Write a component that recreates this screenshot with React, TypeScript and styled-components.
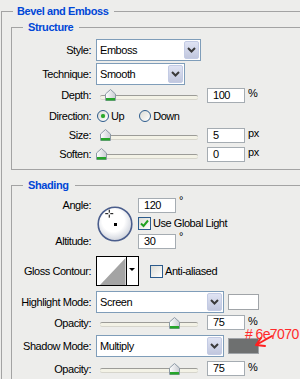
import React from "react";
import styled, { createGlobalStyle } from "styled-components";

const GlobalStyle = createGlobalStyle`
  html, body {
    margin: 0;
    padding: 0;
    background: #ededeb;
    overflow: hidden;
  }
  body {
    font-family: Tahoma, "Liberation Sans", Arial, sans-serif;
    font-size: 11px;
    letter-spacing: -0.45px;
    color: #000;
  }
`;

const Page = styled.div`
  width: 300px;
  height: 379px;
  padding-top: 5px;
  box-sizing: border-box;
  overflow: hidden;
`;

const LINE = "#a3a3a3";

const Group = styled.section<{ $outer?: boolean }>`
  width: ${(p) => (p.$outer ? "340px" : "330px")};
  margin-left: ${(p) => (p.$outer ? "1px" : "0")};
  & + & {
    margin-top: 9px;
  }
`;

const GroupHead = styled.div`
  display: flex;
  align-items: flex-end;
  height: 13px;
  &::before {
    content: "";
    width: 11px;
    height: 6px;
    border-top: 1px solid ${LINE};
    border-left: 1px solid ${LINE};
  }
  &::after {
    content: "";
    flex: 1;
    height: 6px;
    border-top: 1px solid ${LINE};
  }
`;

const GroupTitle = styled.span<{ $outer?: boolean }>`
  align-self: center;
  padding: ${(p) => (p.$outer ? "0 6px 0 4px" : "0 6px 0 5px")};
  line-height: 13px;
  font-weight: bold;
  letter-spacing: -0.4px;
  color: #0047d7;
`;

const GroupBody = styled.div<{ $outer?: boolean }>`
  border-left: 1px solid ${LINE};
  border-bottom: ${(p) => (p.$outer ? "none" : `1px solid ${LINE}`)};
  padding: ${(p) => (p.$outer ? "3px 0 40px 9px" : "5px 0 5px 0")};
`;

const Row = styled.div<{ $h: number; $mt?: number }>`
  position: relative;
  display: flex;
  align-items: center;
  height: ${(p) => p.$h}px;
  margin-top: ${(p) => p.$mt ?? 0}px;
`;

const Label = styled.span`
  flex-shrink: 0;
  width: 79px;
  margin-right: 5px;
  text-align: right;
  white-space: nowrap;
`;

const SelectBox = styled.div<{ $w: number }>`
  display: flex;
  align-items: stretch;
  width: ${(p) => p.$w}px;
  height: 22px;
  box-sizing: border-box;
  border: 1px solid #7f9db9;
  background: #fff;
`;

const SelectText = styled.span`
  flex: 1;
  padding-left: 3px;
  line-height: 20px;
`;

const DropButton = styled.span`
  display: flex;
  align-items: center;
  justify-content: center;
  width: 15px;
  margin: 1px;
  box-sizing: border-box;
  border: 1px solid #c3cbe4;
  border-radius: 2px;
  background: linear-gradient(#dfe3f3, #c1c7de);
`;

const Field = styled.div<{ $ml?: number }>`
  width: 38px;
  height: 15px;
  margin-left: ${(p) => p.$ml ?? 9}px;
  box-sizing: border-box;
  border: 1px solid #a5acb2;
  background: #fff;
  padding-left: 5px;
  line-height: 13px;
`;

const Unit = styled.span`
  margin-left: 3px;
  margin-top: -4px;
`;

const SliderBox = styled.div`
  position: relative;
  display: flex;
  align-items: center;
  width: 102px;
  height: 100%;
  padding-left: 4px;
  box-sizing: border-box;
`;

const Track = styled.div`
  width: 98px;
  height: 3px;
  margin-top: 3px;
  border-radius: 2px;
  border-top: 1px solid #9c9c98;
  background: #f3f2e6;
  box-shadow: 0 1px 0 #d6d5cc;
`;

const Thumb = styled.svg`
  position: absolute;
  top: 50%;
  margin-top: -6px;
`;

const RadioOption = styled.span<{ $ml: number }>`
  display: flex;
  align-items: center;
  margin-left: ${(p) => p.$ml}px;
`;

const RadioDot = styled.span<{ $on?: boolean }>`
  display: inline-flex;
  align-items: center;
  justify-content: center;
  width: 12px;
  height: 12px;
  margin-right: 2px;
  box-sizing: border-box;
  border: 1px solid #2c5b8c;
  border-radius: 50%;
  background: linear-gradient(135deg, #dcdcd5, #fff);
  &::after {
    content: "";
    display: ${(p) => (p.$on ? "block" : "none")};
    width: 4px;
    height: 4px;
    border-radius: 50%;
    background: #2aa72a;
    box-shadow: 0 0 1px #61c861;
  }
`;

const CheckLine = styled.span<{ $ml?: number; $mt?: number }>`
  display: flex;
  align-items: center;
  margin-left: ${(p) => p.$ml ?? 0}px;
  margin-top: ${(p) => p.$mt ?? 0}px;
  white-space: nowrap;
`;

const Box = styled.span`
  display: inline-flex;
  align-items: center;
  justify-content: center;
  width: 13px;
  height: 13px;
  margin-right: 2px;
  box-sizing: border-box;
  border: 1px solid #2c5b8c;
  background: linear-gradient(135deg, #dcdcd5, #fff);
`;

const AngleBlock = styled.div`
  display: flex;
  margin-top: 1px;
`;

const AngleLabels = styled.div`
  display: flex;
  flex-direction: column;
  justify-content: space-between;
  width: 79px;
  height: 51px;
  margin-right: 5px;
  line-height: 15px;
  text-align: right;
`;

const Dial = styled.svg`
  margin: 8px 0 0 1px;
`;

const AngleCol = styled.div`
  display: flex;
  flex-direction: column;
  margin-left: 5px;
`;

const AngleValue = styled.div<{ $mt?: number }>`
  display: flex;
  align-items: flex-start;
  margin-top: ${(p) => p.$mt ?? 0}px;
`;

const Contour = styled.svg`
  display: block;
`;

const Swatch = styled.span<{ $color: string }>`
  width: 31px;
  height: 16px;
  margin-left: 4px;
  box-sizing: border-box;
  border: 1px solid #a0a4a8;
  background: ${(p) => p.$color};
`;

const Note = styled.span`
  position: absolute;
  left: 233px;
  top: -7px;
  font-family: "Liberation Sans", Arial, sans-serif;
  font-size: 14px;
  letter-spacing: -0.6px;
  line-height: 12px;
  color: #ff2b2b;
  white-space: nowrap;
`;

const NoteArrow = styled.svg`
  position: absolute;
  left: 238px;
  top: -2px;
`;

const Chevron = () => (
  <svg width="9" height="6" viewBox="0 0 9 6">
    <polyline points="1,1 4.5,4.5 8,1" fill="none" stroke="#3a3a3a" strokeWidth="2" />
  </svg>
);

const Select = ({ w, value }: { w: number; value: string }) => (
  <SelectBox $w={w}>
    <SelectText>{value}</SelectText>
    <DropButton>
      <Chevron />
    </DropButton>
  </SelectBox>
);

const Slider = ({ at }: { at: number }) => (
  <SliderBox>
    <Track />
    <Thumb width="11" height="12" viewBox="0 0 11 12" style={{ left: at - 5.5 }}>
      <defs>
        <linearGradient id="thumbFill" x1="0" y1="0" x2="1" y2="0">
          <stop offset="0" stopColor="#ffffff" />
          <stop offset="1" stopColor="#c9ccd2" />
        </linearGradient>
      </defs>
      <path d="M5.5 0.5 L10.5 5 L10.5 11.5 L0.5 11.5 L0.5 5 Z" fill="url(#thumbFill)" stroke="#8d9aa6" />
      <rect x="1" y="9" width="9" height="2.5" fill="#26a52a" />
    </Thumb>
  </SliderBox>
);

const SliderRow = ({
  label,
  at,
  value,
  unit,
  h,
  mt,
}: {
  label: string;
  at: number;
  value: string;
  unit: string;
  h: number;
  mt?: number;
}) => (
  <Row $h={h} $mt={mt}>
    <Label>{label}</Label>
    <Slider at={at} />
    <Field>{value}</Field>
    <Unit>{unit}</Unit>
  </Row>
);

const Check = ({ on }: { on?: boolean }) => (
  <Box>
    {on && (
      <svg width="9" height="9" viewBox="0 0 9 9">
        <path d="M1 4.5 L3.5 7 L8 1.5" fill="none" stroke="#21a121" strokeWidth="2" />
      </svg>
    )}
  </Box>
);

const App = () => {
  const angle = 120;
  const rad = (angle * Math.PI) / 180;
  const cx = 18 + Math.cos(rad) * 12.5;
  const cy = 18 - Math.sin(rad) * 12.5;

  return (
    <Page>
      <GlobalStyle />
      <Group $outer>
        <GroupHead>
          <GroupTitle $outer>Bevel and Emboss</GroupTitle>
        </GroupHead>
        <GroupBody $outer>
          <Group>
            <GroupHead>
              <GroupTitle>Structure</GroupTitle>
            </GroupHead>
            <GroupBody>
              <Row $h={22}>
                <Label>Style:</Label>
                <Select w={105} value="Emboss" />
              </Row>
              <Row $h={22} $mt={2}>
                <Label>Technique:</Label>
                <Select w={89} value="Smooth" />
              </Row>
              <SliderRow label="Depth:" at={14} value="100" unit="%" h={20} />
              <Row $h={21}>
                <Label>Direction:</Label>
                <RadioOption $ml={1}>
                  <RadioDot $on />
                  Up
                </RadioOption>
                <RadioOption $ml={15}>
                  <RadioDot />
                  Down
                </RadioOption>
              </Row>
              <SliderRow label="Size:" at={9} value="5" unit="px" h={18} />
              <SliderRow label="Soften:" at={5} value="0" unit="px" h={20} />
            </GroupBody>
          </Group>

          <Group>
            <GroupHead>
              <GroupTitle>Shading</GroupTitle>
            </GroupHead>
            <GroupBody>
              <AngleBlock>
                <AngleLabels>
                  <span>Angle:</span>
                  <span>Altitude:</span>
                </AngleLabels>
                <Dial width="36" height="36" viewBox="0 0 36 36">
                  <defs>
                    <radialGradient id="dialFill" cx="0.45" cy="0.4" r="0.6">
                      <stop offset="0.55" stopColor="#ffffff" />
                      <stop offset="1" stopColor="#cfd3dc" />
                    </radialGradient>
                  </defs>
                  <circle cx="18" cy="18" r="16.8" fill="url(#dialFill)" stroke="#4a5d8c" strokeWidth="1.6" />
                  <rect x="17" y="17" width="3" height="3" fill="#000" />
                  <path
                    d={`M${cx - 4} ${cy} h3 M${cx + 1} ${cy} h3 M${cx} ${cy - 4} v3 M${cx} ${cy + 1} v3`}
                    stroke="#000"
                    strokeWidth="1"
                    transform="translate(0.5 0.5)"
                  />
                </Dial>
                <AngleCol>
                  <AngleValue>
                    <Field $ml={0}>120</Field>
                    <Unit>°</Unit>
                  </AngleValue>
                  <CheckLine $mt={3} style={{ height: 14 }}>
                    <Check on />
                    Use Global Light
                  </CheckLine>
                  <AngleValue $mt={4}>
                    <Field $ml={0}>30</Field>
                    <Unit>°</Unit>
                  </AngleValue>
                </AngleCol>
              </AngleBlock>

              <Row $h={30} $mt={7}>
                <Label>Gloss Contour:</Label>
                <Contour width="43" height="30" viewBox="0 0 43 30">
                  <rect x="0.5" y="0.5" width="42" height="29" fill="#fff" stroke="#000" />
                  <path d="M4 29 L29.5 2 L29.5 29 Z" fill="#a4a4a4" />
                  <line x1="30.5" y1="0.5" x2="30.5" y2="29.5" stroke="#000" />
                  <path d="M33 12 h6 l-3 3 Z" fill="#000" />
                </Contour>
                <CheckLine $ml={11}>
                  <Check />
                  Anti-aliased
                </CheckLine>
              </Row>

              <Row $h={22} $mt={5}>
                <Label>Highlight Mode:</Label>
                <Select w={128} value="Screen" />
                <Swatch $color="#ffffff" />
              </Row>
              <SliderRow label="Opacity:" at={78} value="75" unit="%" h={19} />

              <Row $h={22} $mt={3}>
                <Label>Shadow Mode:</Label>
                <Select w={128} value="Multiply" />
                <Swatch $color="#6e7070" />
                <Note># 6e7070</Note>
                <NoteArrow width="26" height="18" viewBox="0 0 26 18">
                  <path
                    d="M22 3 L6 12 M6 12 L11 5 M6 12 L15 13"
                    fill="none"
                    stroke="#ff2020"
                    strokeWidth="2"
                    strokeLinecap="round"
                  />
                </NoteArrow>
              </Row>
              <SliderRow label="Opacity:" at={78} value="75" unit="%" h={19} mt={2} />
            </GroupBody>
          </Group>
        </GroupBody>
      </Group>
    </Page>
  );
};

export default App;
